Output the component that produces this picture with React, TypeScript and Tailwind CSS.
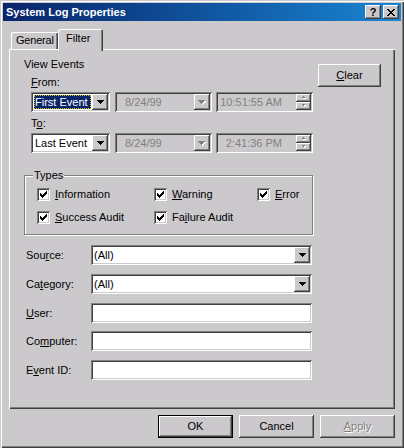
import React from 'react';

const font = "font-['Liberation_Sans',Arial,sans-serif]";
const raised =
  'shadow-[inset_-1px_-1px_#404040,inset_1px_1px_#ffffff,inset_-2px_-2px_#808080,inset_2px_2px_#ccc9cc]';
const sunken =
  'shadow-[inset_1px_1px_#808080,inset_-1px_-1px_#ffffff,inset_2px_2px_#404040,inset_-2px_-2px_#ccc9cc]';

function Arrow({ disabled }: { disabled?: boolean }) {
  if (disabled) {
    return (
      <svg width="8" height="5" viewBox="0 0 8 5" className="block" shapeRendering="crispEdges">
        <path d="M1 1h7v1H1zM2 2h5v1H2zM3 3h3v1H3zM4 4h1v1H4z" fill="#ffffff" />
        <path d="M0 0h7v1H0zM1 1h5v1H1zM2 2h3v1H2zM3 3h1v1H3z" fill="#808080" />
      </svg>
    );
  }
  return (
    <svg width="7" height="4" viewBox="0 0 7 4" className="block" shapeRendering="crispEdges">
      <path d="M0 0h7v1H0zM1 1h5v1H1zM2 2h3v1H2zM3 3h1v1H3z" fill="#000000" />
    </svg>
  );
}

function SmallArrow({ up }: { up?: boolean }) {
  return (
    <svg width="6" height="4" viewBox="0 0 6 4" className="block" shapeRendering="crispEdges">
      {up ? (
        <>
          <path d="M3 1h1v1H3zM2 2h3v1H2z" fill="#ffffff" />
          <path d="M2 0h1v1H2zM1 1h3v1H1z" fill="#808080" />
        </>
      ) : (
        <>
          <path d="M2 1h3v1H2zM3 2h1v1H3z" fill="#ffffff" />
          <path d="M1 0h3v1H1zM2 1h1v1H2z" fill="#808080" />
        </>
      )}
    </svg>
  );
}

function DropBtn({ disabled }: { disabled?: boolean }) {
  return (
    <div className={`w-[16px] h-[16px] shrink-0 flex items-center justify-center bg-[#ccc9cc] ${raised}`}>
      <Arrow disabled={disabled} />
    </div>
  );
}

function Check() {
  return (
    <div className={`w-[13px] h-[13px] shrink-0 bg-white flex items-center justify-center ${sunken}`}>
      <svg width="7" height="7" viewBox="0 0 7 7" className="block" shapeRendering="crispEdges">
        <path
          d="M0 2h1v3H0zM1 3h1v3H1zM2 4h1v3H2zM3 3h1v3H3zM4 2h1v3H4zM5 1h1v3H5zM6 0h1v3H6z"
          fill="#000000"
        />
      </svg>
    </div>
  );
}

function U({ children }: { children: React.ReactNode }) {
  return <span className="underline underline-offset-[1px]">{children}</span>;
}

function CheckItem({ children }: { children: React.ReactNode }) {
  return (
    <div className="flex items-center gap-[5px] h-[13px]">
      <Check />
      <span className="leading-[13px]">{children}</span>
    </div>
  );
}

function RangeRow({ first, date, time, focused }: { first: string; date: string; time: string; focused?: boolean }) {
  return (
    <div className="flex ml-[7px] h-[20px]">
      <div className={`w-[79px] h-[20px] bg-white flex p-[2px] ${sunken}`}>
        <div className="flex-1 p-[1px] flex">
          {focused ? (
            <div className="flex-1 bg-[#0a246a] text-white flex items-center pl-[1px] outline-1 outline-dotted outline-[#c8c000] -outline-offset-1">
              {first}
            </div>
          ) : (
            <div className="flex-1 text-black flex items-center pl-[1px]">{first}</div>
          )}
        </div>
        <DropBtn />
      </div>
      <div className={`ml-[5px] w-[97px] h-[20px] bg-[#ccc9cc] flex p-[2px] ${sunken}`}>
        <div className="flex-1 flex items-center pl-[8px] text-[#808080]">{date}</div>
        <DropBtn disabled />
      </div>
      <div className={`ml-[4px] w-[97px] h-[20px] bg-[#ccc9cc] flex p-[2px] ${sunken}`}>
        <div className="flex-1 flex items-center justify-end pr-[14px] text-[#808080]">{time}</div>
        <div className="w-[15px] flex flex-col">
          <div className={`h-[8px] flex items-center justify-center bg-[#ccc9cc] ${raised}`}>
            <SmallArrow up />
          </div>
          <div className={`h-[8px] flex items-center justify-center bg-[#ccc9cc] ${raised}`}>
            <SmallArrow />
          </div>
        </div>
      </div>
    </div>
  );
}

function FormRow({ label, combo, mt }: { label: React.ReactNode; combo?: boolean; mt: string }) {
  return (
    <div className={`flex items-center h-[20px] ml-[2px] ${mt}`}>
      <div className="w-[65px] leading-[13px]">{label}</div>
      <div className={`w-[221px] h-[20px] bg-white flex p-[2px] ${sunken}`}>
        <div className="flex-1 flex items-center pl-[1px]">{combo ? '(All)' : ''}</div>
        {combo && <DropBtn />}
      </div>
    </div>
  );
}

function Button({ children, def, disabled }: { children: React.ReactNode; def?: boolean; disabled?: boolean }) {
  if (def) {
    return (
      <div className="w-[75px] h-[23px] border border-black">
        <div className={`w-full h-full flex items-center justify-center bg-[#ccc9cc] ${raised}`}>{children}</div>
      </div>
    );
  }
  return (
    <div
      className={`w-[75px] h-[23px] flex items-center justify-center bg-[#ccc9cc] ${raised} ${
        disabled ? 'text-[#808080] [text-shadow:1px_1px_#ffffff]' : ''
      }`}
    >
      {children}
    </div>
  );
}

function TitleBtn({ children }: { children: React.ReactNode }) {
  return (
    <div className={`w-[16px] h-[14px] flex items-center justify-center bg-[#ccc9cc] ${raised}`}>{children}</div>
  );
}

export default function App() {
  return (
    <div
      className={`${font} text-[11px] text-black w-[404px] h-[448px] bg-[#ccc9cc] p-[3px] flex flex-col shadow-[inset_1px_1px_#ccc9cc,inset_2px_2px_#ffffff,inset_-1px_-1px_#404040,inset_-2px_-2px_#808080]`}
    >
      {/* Title bar */}
      <div className="h-[18px] shrink-0 flex items-center bg-linear-to-r from-[#0a246a] to-[#1a86d4] pl-[3px] pr-[2px]">
        <span className="flex-1 text-white font-bold text-[11px] leading-[13px]">System Log Properties</span>
        <div className="flex gap-[2px]">
          <TitleBtn>
            <span className="font-bold text-[11px] leading-[11px] text-black">?</span>
          </TitleBtn>
          <TitleBtn>
            <svg width="8" height="7" viewBox="0 0 8 7" className="block" shapeRendering="crispEdges">
              <path
                d="M0 0h2v1H0zM6 0h2v1H6zM1 1h2v1H1zM5 1h2v1H5zM2 2h4v1H2zM3 3h2v1H3zM2 4h4v1H2zM1 5h2v1H1zM5 5h2v1H5zM0 6h2v1H0zM6 6h2v1H6z"
                fill="#000000"
              />
            </svg>
          </TitleBtn>
        </div>
      </div>

      {/* Body */}
      <div className="flex-1 flex flex-col px-[6px]">
        {/* Tabs */}
        <div className="mt-[8px] flex items-end pl-[2px] h-[20px]">
          <div className="w-[47px] h-[17px] pl-[5px] pt-[2px] leading-[13px] whitespace-nowrap tracking-[-0.2px] rounded-tl-[2px] shadow-[inset_1px_1px_#ffffff,inset_-1px_0_#404040,inset_-2px_0_#808080]">
            General
          </div>
          <div className="relative z-10 w-[45px] h-[22px] -mb-[2px] pl-[8px] pt-[3px] leading-[13px] bg-[#ccc9cc] rounded-tl-[2px] rounded-tr-[2px] shadow-[inset_1px_1px_#ffffff,inset_-1px_0_#404040,inset_-2px_0_#808080]">
            Filter
          </div>
        </div>

        {/* Panel */}
        <div className="h-[360px] shrink-0 pt-[9px] pl-[15px] shadow-[inset_1px_1px_#ffffff,inset_-1px_-1px_#404040,inset_-2px_-2px_#808080]">
          <div className="flex">
            <div className="flex flex-col">
              <div className="h-[13px] leading-[13px]">View Events</div>
              <div className="ml-[7px] mt-[5px] h-[13px] leading-[13px]">
                <U>F</U>rom:
              </div>
              <div className="mt-[3px]">
                <RangeRow first="First Event" date="8/24/99" time="10:51:55 AM" focused />
              </div>
              <div className="ml-[7px] mt-[5px] h-[13px] leading-[13px]">
                T<U>o</U>:
              </div>
              <div className="mt-[3px]">
                <RangeRow first="Last Event" date="8/24/99" time="2:41:36 PM" />
              </div>
            </div>
            <div className="ml-[5px] mt-[6px]">
              <div className={`w-[63px] h-[23px] flex items-center justify-center bg-[#ccc9cc] ${raised}`}>
                <span>
                  <U>C</U>lear
                </span>
              </div>
            </div>
          </div>

          {/* Types group */}
          <div className="relative mt-[22px] w-[289px] h-[60px] border border-[#808080] shadow-[inset_1px_1px_#ffffff,1px_1px_#ffffff] pt-[12px] pl-[12px]">
            <div className="absolute -top-[7px] left-[8px] px-[1px] bg-[#ccc9cc] leading-[13px]">Types</div>
            <div className="grid grid-cols-[117px_103px_auto] gap-y-[10px]">
              <CheckItem>
                <U>I</U>nformation
              </CheckItem>
              <CheckItem>
                <U>W</U>arning
              </CheckItem>
              <CheckItem>
                <U>E</U>rror
              </CheckItem>
              <CheckItem>
                <U>S</U>uccess Audit
              </CheckItem>
              <CheckItem>
                Fa<U>i</U>lure Audit
              </CheckItem>
            </div>
          </div>

          {/* Form */}
          <FormRow
            mt="mt-[10px]"
            combo
            label={
              <>
                Sou<U>r</U>ce:
              </>
            }
          />
          <FormRow
            mt="mt-[9px]"
            combo
            label={
              <>
                Ca<U>t</U>egory:
              </>
            }
          />
          <FormRow
            mt="mt-[9px]"
            label={
              <>
                <U>U</U>ser:
              </>
            }
          />
          <FormRow
            mt="mt-[8px]"
            label={
              <>
                Co<U>m</U>puter:
              </>
            }
          />
          <FormRow
            mt="mt-[9px]"
            label={
              <>
                E<U>v</U>ent ID:
              </>
            }
          />
        </div>

        {/* Buttons */}
        <div className="mt-[6px] flex justify-end gap-[6px]">
          <Button def>OK</Button>
          <Button>Cancel</Button>
          <Button disabled>
            <span>
              <U>A</U>pply
            </span>
          </Button>
        </div>
      </div>
    </div>
  );
}
